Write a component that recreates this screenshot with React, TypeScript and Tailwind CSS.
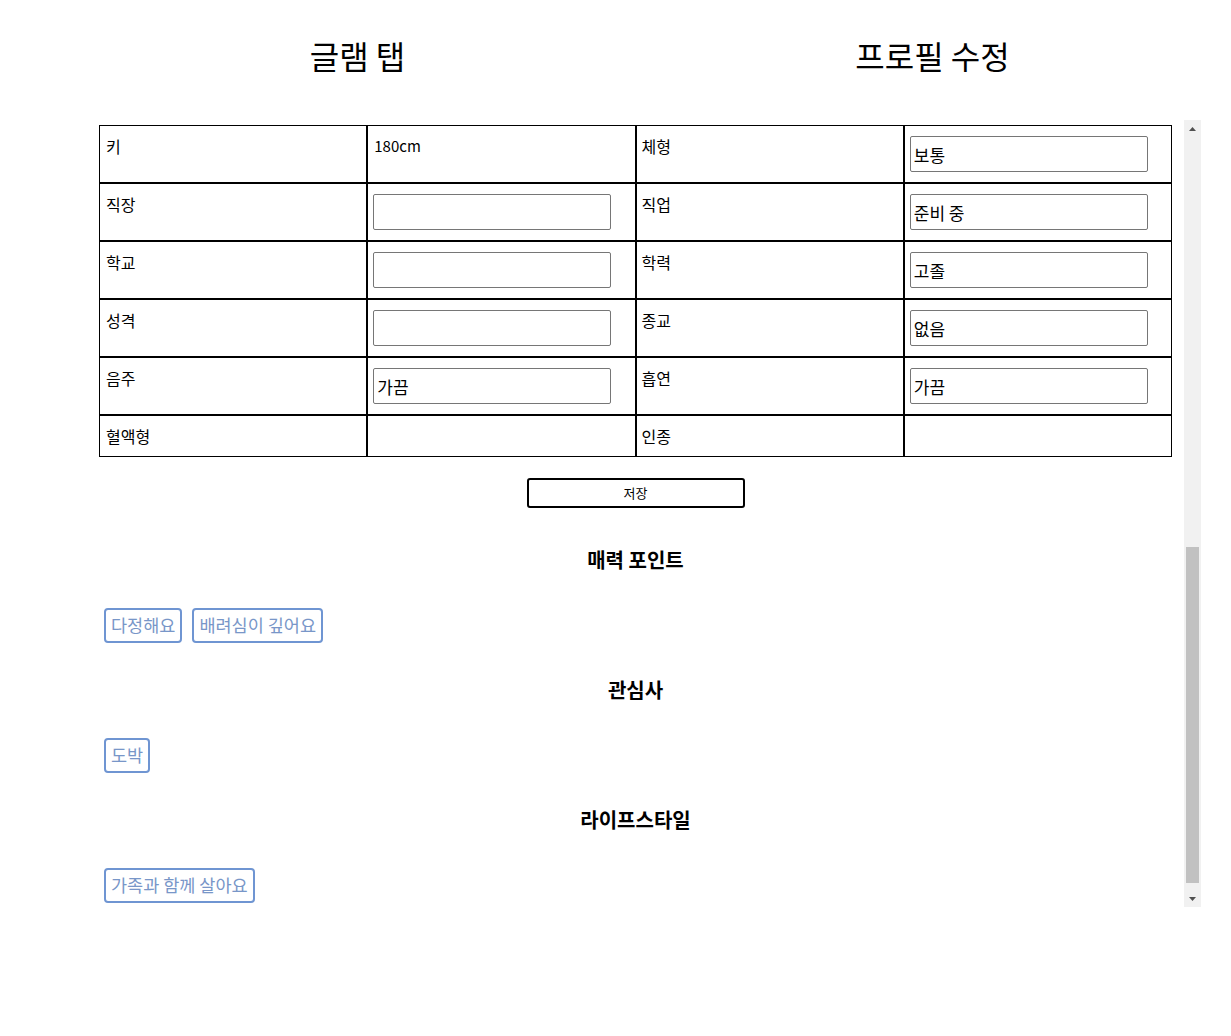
const rows: [string, string | null, string, string | null][] = [
  ['키', '#180cm', '체형', '보통'],
  ['직장', '', '직업', '준비 중'],
  ['학교', '', '학력', '고졸'],
  ['성격', '', '종교', '없음'],
  ['음주', '가끔', '흡연', '가끔'],
  ['혈액형', null, '인종', null],
]

const sections = [
  { title: '매력 포인트', tags: ['다정해요', '배려심이 깊어요'] },
  { title: '관심사', tags: ['도박'] },
  { title: '라이프스타일', tags: ['가족과 함께 살아요'] },
]

function ValueCell({ value }: { value: string | null }) {
  if (value === null) return <td className="border border-black px-[6px] py-[10px] align-top" />
  if (value.startsWith('#'))
    return <td className="border border-black px-[6px] py-[10px] align-top text-[15px]">{value.slice(1)}</td>
  return (
    <td className="border border-black px-[5px] py-[10px] align-top">
      <input
        defaultValue={value}
        className="block w-[238px] h-[36px] border border-[#767676] rounded-[2px] px-[3px] text-[17px] text-black outline-none"
      />
    </td>
  )
}

function Scrollbar() {
  return (
    <div className="w-[17px] h-[787px] bg-[#f1f1f1] flex flex-col">
      <div className="h-[17px] flex items-center justify-center">
        <svg width="7" height="4" viewBox="0 0 7 4">
          <path d="M3.5 0L7 4H0Z" fill="#505050" />
        </svg>
      </div>
      <div className="flex-1 flex flex-col justify-end px-[2px] pb-[7px]">
        <div className="h-[336px] bg-[#c1c1c1]" />
      </div>
      <div className="h-[17px] flex items-center justify-center">
        <svg width="7" height="4" viewBox="0 0 7 4">
          <path d="M0 0H7L3.5 4Z" fill="#505050" />
        </svg>
      </div>
    </div>
  )
}

export default function App() {
  return (
    <div className="w-[1231px] h-[1036px] bg-white text-black" style={{ fontFamily: '"Noto Sans CJK KR", "Noto Sans", sans-serif' }}>
      <div className="h-[120px] pt-[31px] ml-[70px] grid grid-cols-[575px_575px]">
        <h1 className="text-center text-[32px] leading-[48px] font-normal">글램 탭</h1>
        <h1 className="text-center text-[32px] leading-[48px] font-normal">프로필 수정</h1>
      </div>

      <div className="ml-[99px] flex">
        <div className="w-[1085px] h-[787px] overflow-hidden">
          <div className="w-[1073px] pt-[5px]">
            <table className="table-fixed w-[1073px] border-separate border-spacing-0 text-[16px] leading-[20px]">
              <tbody>
                {rows.map(([l1, v1, l2, v2]) => (
                  <tr key={l1}>
                    <td className="border border-black px-[6px] py-[10px] align-top">{l1}</td>
                    <ValueCell value={v1} />
                    <td className="border border-black px-[5px] py-[10px] align-top">{l2}</td>
                    <ValueCell value={v2} />
                  </tr>
                ))}
              </tbody>
            </table>

            <button className="block mx-auto mt-[21px] w-[218px] h-[30px] border-2 border-black rounded-[3px] text-[13px] bg-white">
              저장
            </button>

            {sections.map((s, i) => (
              <div key={s.title} className={i === 0 ? 'mt-[40px]' : 'mt-[35px]'}>
                <h3 className="text-center text-[20px] leading-[24px] font-bold">{s.title}</h3>
                <div className="mt-[36px] flex gap-[10px] pl-[5px]">
                  {s.tags.map((t) => (
                    <span
                      key={t}
                      className="h-[35px] flex items-center px-[5px] border-2 border-[#6f95d2] rounded-[4px] text-[17.5px] text-[#7896c8]"
                    >
                      {t}
                    </span>
                  ))}
                </div>
              </div>
            ))}
          </div>
        </div>
        <Scrollbar />
      </div>
    </div>
  )
}
